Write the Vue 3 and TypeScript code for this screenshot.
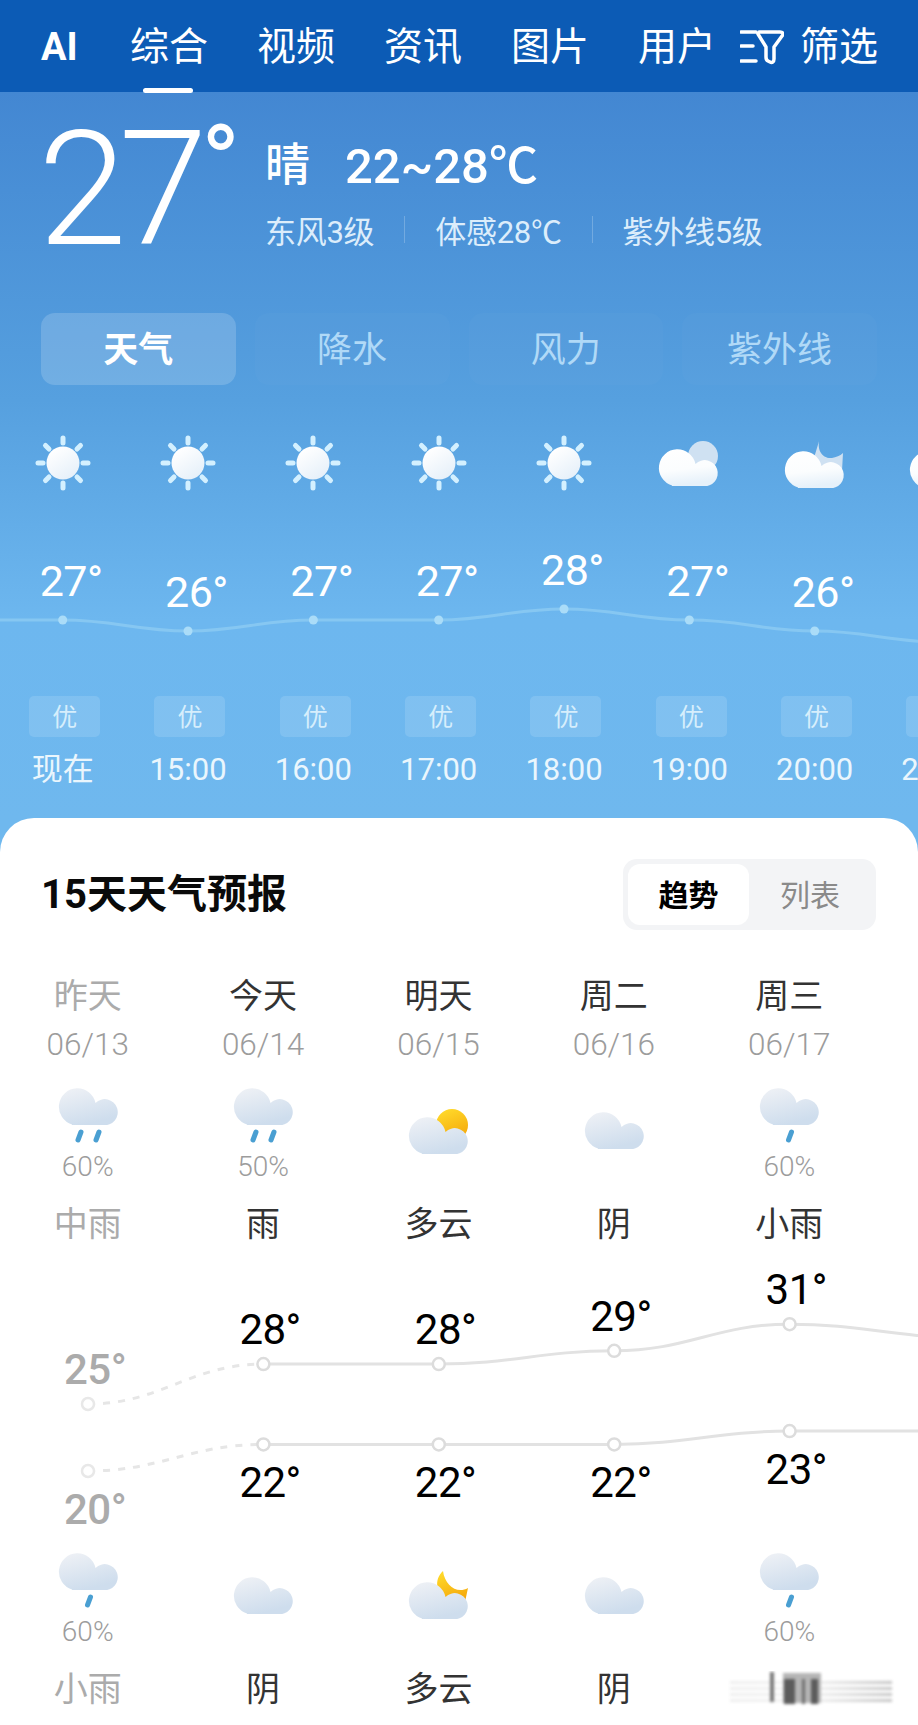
<template>
  <div class="page">
    <!-- shared weather icons -->
    <svg class="sprite" aria-hidden="true">
      <defs>
        <linearGradient id="grey-cloud" x1="0" y1="0" x2="0.4" y2="1">
          <stop offset="0" stop-color="#f0f2f6" />
          <stop offset="1" stop-color="#cedded" />
        </linearGradient>
        <linearGradient id="white-cloud" x1="0" y1="0" x2="0.2" y2="1">
          <stop offset="0" stop-color="#ffffff" />
          <stop offset="0.6" stop-color="#fbfdfe" />
          <stop offset="1" stop-color="#e6f1fa" />
        </linearGradient>
        <linearGradient id="sun-disc" x1="0.2" y1="0.1" x2="0.8" y2="1">
          <stop offset="0" stop-color="#ffffff" />
          <stop offset="1" stop-color="#e4eff9" />
        </linearGradient>
        <linearGradient id="gold" x1="0.3" y1="0" x2="0.7" y2="1">
          <stop offset="0" stop-color="#ffd92a" />
          <stop offset="1" stop-color="#f4a60a" />
        </linearGradient>
        <path id="cloud-shape" d="M19 39.500A18.500 18.500 0 1 1 42.500 18A13 13 0 1 1 50 40H19Z" />
      </defs>
      <symbol id="ic-sun" viewBox="0 0 70 70">
        <g stroke="#d3f0ff" stroke-width="5" stroke-linecap="round">
          <path d="M35 13v5M35 58v5M10 38h5M55 38h5M17.500 20.500l3.500 3.500M52.500 20.500l-3.500 3.500M17.500 55.500l3.500-3.500M52.500 55.500l-3.500-3.500" />
        </g>
        <circle cx="35" cy="38" r="16.500" fill="url(#sun-disc)" />
      </symbol>
      <symbol id="ic-day-white" viewBox="0 0 70 70">
        <circle cx="49" cy="31" r="15" fill="#cfe1f2" />
        <use href="#cloud-shape" fill="url(#white-cloud)" transform="translate(-1 21)" />
      </symbol>
      <symbol id="ic-night-white" viewBox="0 0 70 70">
        <path d="M40 13C36 24 42 34 52 33 56 32 60 31 63 28L62 46H30Z" fill="#cfe1f2" />
        <use href="#cloud-shape" fill="url(#white-cloud)" transform="translate(-1 23)" />
      </symbol>
      <symbol id="ic-rain2" viewBox="0 0 70 70">
        <use href="#cloud-shape" fill="url(#grey-cloud)" />
        <path d="M25 55l3-8M43 55l3-8" stroke="#4a9fd2" stroke-width="5" stroke-linecap="round" />
      </symbol>
      <symbol id="ic-rain1" viewBox="0 0 70 70">
        <use href="#cloud-shape" fill="url(#grey-cloud)" />
        <path d="M34.500 55l3-8" stroke="#4a9fd2" stroke-width="5" stroke-linecap="round" />
      </symbol>
      <symbol id="ic-cloud" viewBox="0 0 70 70">
        <use href="#cloud-shape" fill="url(#grey-cloud)" transform="translate(0 24)" />
      </symbol>
      <symbol id="ic-sun-cloud" viewBox="0 0 70 70">
        <circle cx="49" cy="40" r="16" fill="url(#gold)" />
        <use href="#cloud-shape" fill="url(#grey-cloud)" transform="translate(0 29)" />
      </symbol>
      <symbol id="ic-moon-cloud" viewBox="0 0 70 70">
        <path d="M40 21C30 30 33 46 48 50L62 52 65 38C54 44 42 36 40 21Z" fill="url(#gold)" />
        <use href="#cloud-shape" fill="url(#grey-cloud)" transform="translate(0 29)" />
      </symbol>
    </svg>

    <header class="top-bar">
      <span class="ai">AI</span>
      <span v-for="(item, i) in navItems" :key="item" :class="['nav-item', { active: i === 0 }]">{{ item }}</span>
      <div class="filter">
        <svg class="filter-icon" viewBox="0 0 44 36" fill="none" stroke="#fff" stroke-width="3.500" stroke-linecap="round" stroke-linejoin="round">
          <path d="M1 3h15M1 17h12M1 32h15M19 3h21c3 0 4 2 2 4L34 18v12c0 3-2 4-4 3l-2-1c-2-1-2-2-2-4V18L18 5" />
        </svg>
        <span>筛选</span>
      </div>
    </header>

    <section class="hero">
      <div class="summary">
        <div class="now">27<span class="now-deg">°</span></div>
        <div class="info">
          <div class="info-main">
            <span class="cond">晴</span>
            <span class="range">22~28℃</span>
          </div>
          <div class="info-sub">
            <span>东风3级</span>
            <i class="sep"></i>
            <span>体感28℃</span>
            <i class="sep"></i>
            <span>紫外线5级</span>
          </div>
        </div>
      </div>

      <div class="tabs">
        <div v-for="(tab, i) in tabs" :key="tab" :class="['tab', { active: i === 0 }]">{{ tab }}</div>
      </div>

      <div class="hours">
        <div class="hour-icons">
          <div v-for="h in hours" :key="h.time" class="hour-col">
            <svg class="slot"><use :href="'#ic-' + h.icon" /></svg>
          </div>
        </div>
        <div class="hour-chart">
          <svg class="chart-svg" width="918" height="201" fill="none">
            <path :d="hourLine" stroke="#86c7f2" stroke-width="3" />
            <circle v-for="p in hourPoints" :key="p.x" :cx="p.x" :cy="p.y" r="4.500" fill="#aadcf8" />
          </svg>
          <span
            v-for="p in hourPoints"
            :key="p.x"
            class="hour-temp"
            :style="{ left: p.x - 23 + 'px', top: p.y - 64 + 'px' }"
          >{{ p.t }}°</span>
        </div>
        <div class="hour-badges">
          <div v-for="h in hours" :key="h.time" class="hour-col">
            <span class="badge">优</span>
          </div>
        </div>
        <div class="hour-times">
          <div v-for="h in hours" :key="h.time" class="hour-col time">{{ h.time }}</div>
        </div>
      </div>
    </section>

    <section class="card">
      <div class="card-head">
        <h2 class="card-title">15天天气预报</h2>
        <div class="segment">
          <span class="seg on">趋势</span>
          <span class="seg">列表</span>
        </div>
      </div>

      <div class="days">
        <div v-for="d in days" :key="d.date" :class="['day', { past: d.past }]">
          <div class="day-name">{{ d.name }}</div>
          <div class="day-date">{{ d.date }}</div>
          <svg class="slot"><use :href="'#ic-' + d.icon" /></svg>
          <div class="pop">{{ d.pop }}</div>
          <div class="desc">{{ d.desc }}</div>
        </div>
      </div>

      <div class="trend">
        <svg class="chart-svg" width="918" height="304" fill="none">
          <g v-for="(line, n) in trendLines" :key="n">
            <path :d="line.dashed" stroke="#e6e6e6" stroke-width="3" stroke-dasharray="7 8" />
            <path :d="line.solid" stroke="#e2e2e2" stroke-width="3" />
            <circle
              v-for="(p, i) in line.points.slice(0, 5)"
              :key="p.x"
              :cx="p.x"
              :cy="p.y"
              r="6"
              fill="#fff"
              :stroke="i === 0 ? '#e8e8e8' : '#dcdcdc'"
              stroke-width="2.500"
            />
          </g>
        </svg>
        <template v-for="(line, n) in trendLines" :key="n">
          <span
            v-for="(p, i) in line.points.slice(0, 5)"
            :key="p.x"
            :class="['trend-temp', { past: i === 0 }]"
            :style="{ left: p.x - 24 + 'px', top: p.y + line.labelOffset + 'px' }"
          >{{ p.t }}°</span>
        </template>
      </div>

      <div class="days">
        <div v-for="d in nights" :key="d.key" :class="['day', { past: d.past }]">
          <svg class="slot"><use :href="'#ic-' + d.icon" /></svg>
          <div class="pop">{{ d.pop }}</div>
          <div class="desc">{{ d.desc }}</div>
        </div>
      </div>

      <!-- blurred watermark over the last column -->
      <svg class="watermark" width="170" height="40">
        <defs>
          <linearGradient id="wm-fade">
            <stop offset="0" stop-color="#eeeeee" />
            <stop offset="0.5" stop-color="#f2f2f2" />
            <stop offset="1" stop-color="#c4c4c4" />
          </linearGradient>
        </defs>
        <g class="wm-blur">
          <rect v-for="y in [10, 16, 22, 28]" :key="y" x="2" :y="y" width="162" height="3" fill="url(#wm-fade)" />
          <rect x="42" y="1" width="4" height="30" fill="#777" />
          <rect x="55" y="2" width="38" height="30" fill="#b5b5b5" />
          <rect x="56" y="8" width="11" height="25" fill="#5c5c5c" />
          <rect x="74" y="8" width="3" height="25" fill="#707070" />
          <rect x="83" y="8" width="7" height="25" fill="#5c5c5c" />
        </g>
      </svg>
    </section>
  </div>
</template>

<script setup lang="ts">
import { computed } from 'vue'

interface Hour {
  time: string
  temp: number
  icon: string
}

interface Point {
  x: number
  y: number
  t: number
}

const navItems = ['综合', '视频', '资讯', '图片', '用户']
const tabs = ['天气', '降水', '风力', '紫外线']

const hours: Hour[] = [
  { time: '现在', temp: 27, icon: 'sun' },
  { time: '15:00', temp: 26, icon: 'sun' },
  { time: '16:00', temp: 27, icon: 'sun' },
  { time: '17:00', temp: 27, icon: 'sun' },
  { time: '18:00', temp: 28, icon: 'sun' },
  { time: '19:00', temp: 27, icon: 'day-white' },
  { time: '20:00', temp: 26, icon: 'night-white' },
  { time: '21:00', temp: 25, icon: 'night-white' },
]

const days = [
  { name: '昨天', date: '06/13', icon: 'rain2', pop: '60%', desc: '中雨', past: true },
  { name: '今天', date: '06/14', icon: 'rain2', pop: '50%', desc: '雨', past: false },
  { name: '明天', date: '06/15', icon: 'sun-cloud', pop: '', desc: '多云', past: false },
  { name: '周二', date: '06/16', icon: 'cloud', pop: '', desc: '阴', past: false },
  { name: '周三', date: '06/17', icon: 'rain1', pop: '60%', desc: '小雨', past: false },
]

const nights = [
  { key: 'n1', icon: 'rain1', pop: '60%', desc: '小雨', past: true },
  { key: 'n2', icon: 'cloud', pop: '', desc: '阴', past: false },
  { key: 'n3', icon: 'moon-cloud', pop: '', desc: '多云', past: false },
  { key: 'n4', icon: 'cloud', pop: '', desc: '阴', past: false },
  { key: 'n5', icon: 'rain1', pop: '60%', desc: '', past: false },
]

// horizontal tangents at every point, which is how the app draws its curves
const curve = (pts: Point[]) => {
  let d = `M${pts[0].x} ${pts[0].y}`
  for (let i = 1; i < pts.length; i++) {
    const a = pts[i - 1]
    const b = pts[i]
    const dx = (b.x - a.x) * 0.42
    d += ` C${a.x + dx} ${a.y} ${b.x - dx} ${b.y} ${b.x} ${b.y}`
  }
  return d
}

const hourPoints = computed<Point[]>(() =>
  hours.map((h, i) => ({ x: 62.7 + i * 125.33, y: 125 + (27 - h.temp) * 11, t: h.temp })),
)

const hourLine = computed(() => curve([{ x: -60, y: 125, t: 27 }, ...hourPoints.value]))

const makeLine = (temps: number[], base: number, perDegree: number, labelOffset: number) => {
  const points = temps.map((t, i) => ({
    x: 88 + i * 175.4,
    y: base - t * perDegree,
    t,
  }))
  return {
    points,
    labelOffset,
    dashed: curve(points.slice(0, 2)),
    solid: curve(points.slice(1)),
  }
}

// y values are relative to the top of the trend block
const trendLines = [
  makeLine([25, 28, 28, 29, 31, 30], 158 + 25 * 13.3, 13.3, -58),
  makeLine([20, 22, 22, 22, 23, 23], 225 + 20 * 13.3, 13.3, 15),
]
</script>

<style>
body {
  margin: 0;
}
</style>

<style scoped>
.page {
  position: relative;
  width: 918px;
  height: 1725px;
  overflow: hidden;
  font-family: Roboto, "Noto Sans CJK SC", sans-serif;
  background: linear-gradient(180deg, #4387d2 92px, #56a0df 400px, #6db7ef 620px, #6fb8ee 820px);
}

.sprite {
  position: absolute;
  width: 0;
  height: 0;
}

.top-bar {
  display: flex;
  align-items: center;
  gap: 49px;
  height: 92px;
  padding: 2px 42px 0 41px;
  box-sizing: border-box;
  background: #0c5bb5;
  color: #fff;
  font-size: 39px;
  line-height: 1;
  white-space: nowrap;
}

.ai {
  flex: none;
  width: 40px;
  font-weight: 700;
  font-size: 38px;
}

.nav-item {
  position: relative;
  flex: none;
}

.nav-item.active::after {
  content: "";
  position: absolute;
  left: 13px;
  width: 50px;
  bottom: -26px;
  height: 5px;
  border-radius: 3px;
  background: #fff;
}

.filter {
  display: flex;
  flex: none;
  align-items: center;
  gap: 16px;
  margin-left: -25px;
}

.filter-icon {
  width: 44px;
  height: 36px;
}

.summary {
  display: flex;
  height: 221px;
  padding-left: 38px;
  box-sizing: border-box;
  color: #fff;
}

.now {
  position: relative;
  width: 227px;
  margin-top: 18px;
  font-size: 160px;
  font-weight: 300;
  line-height: 1;
  letter-spacing: -8px;
}

.now-deg {
  position: absolute;
  top: 2px;
  left: 163px;
  font-size: 105px;
  font-weight: 400;
  letter-spacing: 0;
}

.info {
  padding-top: 45px;
}

.info-main {
  display: flex;
  align-items: center;
  gap: 35px;
  height: 48px;
}

.cond {
  font-size: 45px;
  font-weight: 500;
}

.range {
  font-size: 49px;
  font-weight: 500;
}

.info-sub {
  display: flex;
  align-items: center;
  gap: 30px;
  margin-top: 22px;
  height: 44px;
  font-size: 31px;
  color: #dcedfb;
  letter-spacing: -0.3px;
}

.sep {
  width: 1px;
  height: 27px;
  background: rgba(255, 255, 255, 0.22);
}

.tabs {
  display: grid;
  grid-template-columns: repeat(4, 1fr);
  gap: 19px;
  height: 72px;
  padding: 0 41px;
}

.tab {
  display: flex;
  align-items: center;
  justify-content: center;
  padding-bottom: 6px;
  box-sizing: border-box;
  border-radius: 14px;
  background: rgba(255, 255, 255, 0.02);
  color: #b0d9f7;
  font-size: 35px;
}

.tab.active {
  background: rgba(255, 255, 255, 0.17);
  color: #fff;
  font-weight: 700;
}

.hours {
  margin-top: 40px;
}

.hour-icons,
.hour-badges,
.hour-times {
  display: flex;
}

.hour-col {
  flex: 0 0 125.33px;
  display: flex;
  justify-content: center;
}

.slot {
  display: block;
  width: 70px;
  height: 70px;
  flex: none;
}

.hour-chart {
  position: relative;
  height: 201px;
}

.chart-svg {
  position: absolute;
  left: 0;
  top: 0;
}

.hour-temp {
  position: absolute;
  font-size: 43px;
  line-height: 50px;
  letter-spacing: -0.5px;
  color: #fff;
  white-space: nowrap;
}

.badge {
  display: flex;
  align-items: center;
  justify-content: center;
  width: 71px;
  height: 41px;
  margin-left: 4px;
  padding-bottom: 3px;
  box-sizing: border-box;
  border-radius: 5px;
  background: rgba(255, 255, 255, 0.13);
  color: #d6eefc;
  font-size: 25px;
}

.hour-times {
  margin-top: 13px;
}

.time {
  font-size: 31px;
  line-height: 40px;
  color: #eaf6fd;
  white-space: nowrap;
}

.card {
  position: absolute;
  left: 0;
  right: 0;
  top: 818px;
  bottom: 0;
  border-radius: 34px 34px 0 0;
  background: #fff;
}

.card-head {
  display: flex;
  align-items: center;
  justify-content: space-between;
  padding: 41px 42px 0 41px;
}

.card-title {
  margin: 0;
  font-size: 40px;
  font-weight: 700;
  color: #0a0a0a;
  line-height: 1;
}

.segment {
  display: flex;
  box-sizing: border-box;
  width: 253px;
  height: 71px;
  padding: 5px;
  border-radius: 14px;
  background: #f3f4f6;
}

.seg {
  flex: 1;
  display: flex;
  align-items: center;
  justify-content: center;
  padding-bottom: 4px;
  box-sizing: border-box;
  border-radius: 12px;
  font-size: 30px;
  color: #8a8a8a;
}

.seg.on {
  flex: 0 0 121px;
  background: #fff;
  color: #000;
  font-weight: 700;
}

.days {
  display: flex;
}

.day {
  flex: 0 0 175.4px;
  display: flex;
  flex-direction: column;
  align-items: center;
  color: #333;
}

.day-name {
  margin-top: 44px;
  height: 44px;
  line-height: 44px;
  font-size: 34px;
}

.day-date {
  margin: 10px 0 23px;
  height: 34px;
  line-height: 34px;
  font-size: 31.500px;
  font-weight: 300;
  color: #9c9c9c;
}

.pop {
  height: 24px;
  line-height: 24px;
  font-size: 28px;
  font-weight: 300;
  color: #9c9c9c;
}

.desc {
  margin-top: 23px;
  height: 44px;
  line-height: 44px;
  font-size: 34px;
}

.day.past .day-name,
.day.past .desc {
  color: #ababab;
}

.trend {
  position: relative;
  height: 304px;
}

.trend-temp {
  position: absolute;
  font-size: 42px;
  line-height: 48px;
  letter-spacing: -0.5px;
  color: #000;
  white-space: nowrap;
}

.trend-temp.past {
  color: #ababab;
  font-weight: 500;
}

.watermark {
  position: absolute;
  left: 728px;
  top: 853px;
}

.wm-blur {
  filter: blur(1.8px);
}
</style>
